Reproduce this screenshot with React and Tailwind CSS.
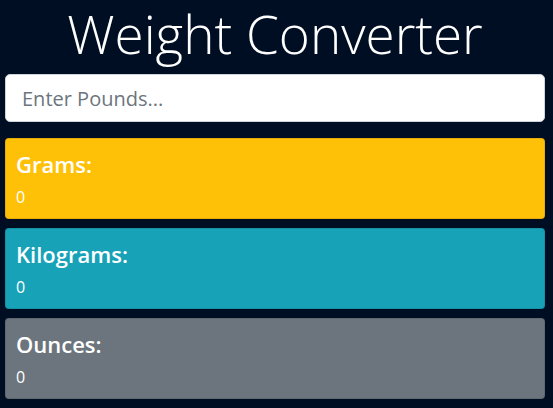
import { useState } from 'react';

const units = [
  { label: 'Grams:', factor: 453.59237, bg: 'bg-[#ffc107]' },
  { label: 'Kilograms:', factor: 0.45359237, bg: 'bg-[#17a2b8]' },
  { label: 'Ounces:', factor: 16, bg: 'bg-[#6c757d]' },
];

export default function App() {
  const [pounds, setPounds] = useState('');

  const convert = (factor) => {
    const n = parseFloat(pounds);
    if (isNaN(n)) return 0;
    return +(n * factor).toFixed(4);
  };

  return (
    <div className="min-h-screen bg-[#000e24] pl-[5px] pr-[8px] font-['Open_Sans',sans-serif] text-white">
      <h1 className="text-center text-[53px] font-light leading-[67px] mb-[7px]">
        Weight Converter
      </h1>

      <input
        type="number"
        value={pounds}
        onChange={(e) => setPounds(e.target.value)}
        placeholder="Enter Pounds..."
        className="block w-full h-[48px] rounded-[5px] border border-[#ced4da] bg-white px-4 text-[20px] text-[#495057] placeholder:text-[#6c757d] outline-none mb-4"
      />

      <div className="flex flex-col gap-[9px]">
        {units.map((u) => (
          <div
            key={u.label}
            className={`${u.bg} h-[81px] rounded-[4px] border border-black/10 px-[10px] pt-[12px]`}
          >
            <h4 className="text-[22px] font-semibold leading-[1.2] mb-2">{u.label}</h4>
            <div className="text-[16px] leading-6">{convert(u.factor)}</div>
          </div>
        ))}
      </div>
    </div>
  );
}
